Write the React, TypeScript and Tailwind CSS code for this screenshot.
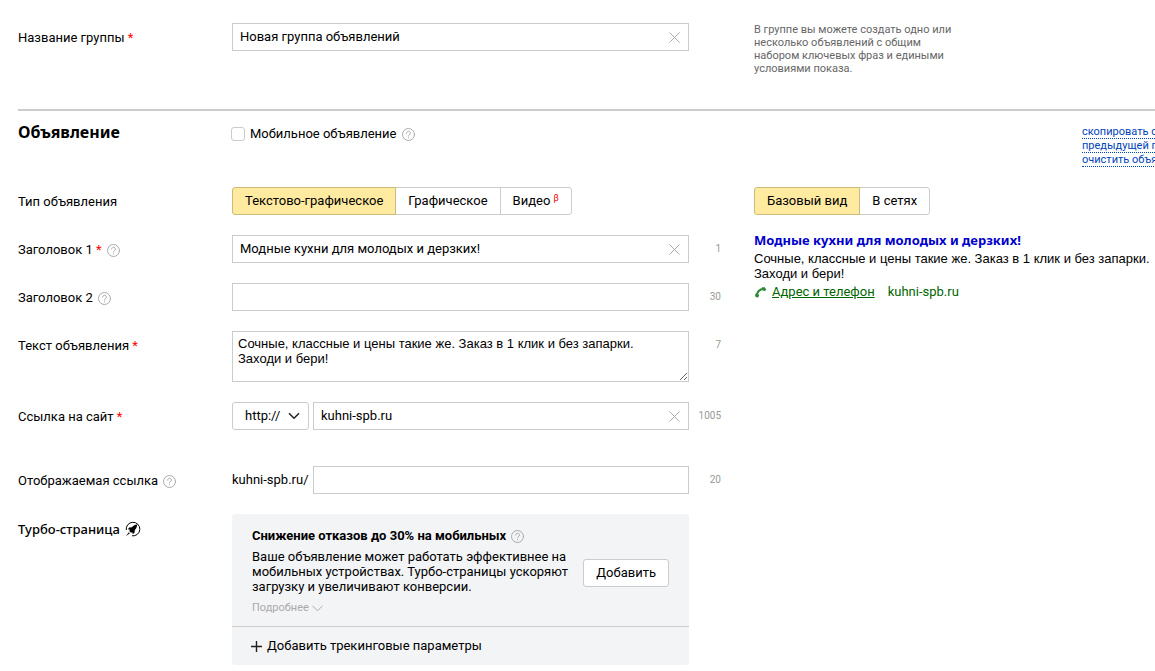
import { useId, useState, type ReactNode } from 'react';

function HelpButton() {
    return (
        <button type="button" aria-label="Справка" className="shrink-0 text-[#aaaaaa] cursor-pointer">
            <svg width="13" height="13" viewBox="0 0 13 13" fill="none" stroke="currentColor" strokeLinecap="round">
                <circle cx="6.5" cy="6.5" r="6" />
                <path d="M4.6 5.1a1.9 1.9 0 1 1 2.9 1.6c-.7.4-1 .7-1 1.3" />
                <path d="M6.5 9.7v.2" />
            </svg>
        </button>
    );
}

function Row({ label, htmlFor, required, help, counter, children }: {
    label: string;
    htmlFor?: string;
    required?: boolean;
    help?: boolean;
    counter?: number;
    children: ReactNode;
}) {
    return (
        <div className="grid grid-cols-[214px_minmax(0,1fr)_32px] items-start">
            <div className="flex items-center gap-[5px] pt-[7px]">
                <label htmlFor={htmlFor}>
                    {label}
                    {required && <span className="text-[#ff0000]"> *</span>}
                </label>
                {help && <HelpButton />}
            </div>
            {children}
            {counter !== undefined && (
                <span className="pt-[6px] text-right text-[10px] text-[#999999]">{counter}</span>
            )}
        </div>
    );
}

function TextField({ id, initial = '' }: { id: string; initial?: string }) {
    const [value, setValue] = useState(initial);

    return (
        <div className="flex h-7 min-w-0 flex-1 items-center border border-[#cccccc] bg-white">
            <input
                id={id}
                type="text"
                value={value}
                onChange={e => setValue(e.target.value)}
                className="h-full min-w-0 flex-1 bg-transparent px-[7px] pb-[2px] outline-none"
            />
            {value && (
                <button type="button" aria-label="Очистить" onClick={() => setValue('')} className="px-2 text-[#aaaaaa] cursor-pointer">
                    <svg width="11" height="11" viewBox="0 0 11 11" stroke="currentColor">
                        <path d="M.5.5l10 10M10.5.5l-10 10" />
                    </svg>
                </button>
            )}
        </div>
    );
}

function Segmented({ items }: { items: { key: string; title: ReactNode }[] }) {
    const [active, setActive] = useState(items[0].key);

    return (
        <div className="flex">
            {items.map(item => (
                <button
                    key={item.key}
                    type="button"
                    aria-pressed={item.key === active}
                    onClick={() => setActive(item.key)}
                    className={`-ml-px h-7 border px-3 cursor-pointer first:ml-0 first:rounded-l-[3px] last:rounded-r-[3px] ${
                        item.key === active ? 'z-10 border-[#ccba79] bg-[#ffeba0]' : 'border-[#cccccc] bg-white'
                    }`}
                >
                    {item.title}
                </button>
            ))}
        </div>
    );
}

function RocketIcon() {
    return (
        <svg width="16" height="16" viewBox="0 0 16 16" fill="none">
            <path d="M1.300 9A6.800 6.800 0 1 1 7 14.800" stroke="#000" />
            <path d="M12.200 3.600c-2.700.3-4.100 1.200-5.300 2.600L4.300 6.500 2.800 8.300l2 .3-.5 1.500 1.600 1.600 1.500-.5.300 2 1.800-1.500.3-2.600c1.400-1.300 2.200-2.800 2.400-5.500z" fill="#000" />
            <path d="M3.800 11.200l1 1L.8 15.200z" fill="#000" />
        </svg>
    );
}

export default function App() {
    const id = useId();

    return (
        <main className="overflow-x-hidden bg-white pl-[18px] pb-[6px] font-['Roboto',sans-serif] text-[13px] leading-4 text-black">
            <section className="grid grid-cols-[minmax(0,703px)_minmax(0,1fr)] gap-x-[33px] border-b-2 border-[#cccccc] pt-[23px] pb-[34px]">
                <Row label="Название группы" htmlFor={`${id}-group`} required>
                    <TextField id={`${id}-group`} initial="Новая группа объявлений" />
                </Row>
                <p className="max-w-[200px] text-[11px] leading-[13px] text-[#666666]">
                    В группе вы можете создать одно или несколько объявлений с общим набором ключевых фраз и едиными условиями показа.
                </p>
            </section>

            <section>
                <header className="flex h-[76px] items-start pt-[11px]">
                    <h2 className="w-[214px] shrink-0 font-['Noto_Sans',sans-serif] text-[16px] leading-5 font-bold">Объявление</h2>
                    <div className="flex flex-1 items-center gap-[5px] pt-[4px]">
                        <label className="flex items-center gap-[5px]">
                            <input type="checkbox" className="-ml-px size-[14px] appearance-none rounded-[3px] border border-[#cccccc] bg-white checked:bg-[#ffeba0]" />
                            Мобильное объявление
                        </label>
                        <HelpButton />
                    </div>
                    <div className="w-[73px] shrink-0 pt-[3px] text-[11px] leading-[13px] whitespace-nowrap text-[#0044bb]">
                        <a href="#copy" className="block w-max border-b border-dotted border-[#0044bb]">скопировать с</a>
                        <a href="#copy" className="block w-max border-b border-dotted border-[#0044bb]">предыдущей группы</a>
                        <a href="#clear" className="block w-max border-b border-dotted border-[#0044bb]">очистить объявление</a>
                    </div>
                </header>

                <div className="grid grid-cols-[minmax(0,703px)_minmax(0,1fr)] items-start gap-x-[33px]">
                    <form className="flex flex-col gap-5" onSubmit={e => e.preventDefault()}>
                        <Row label="Тип объявления">
                            <Segmented
                                items={[
                                    { key: 'text', title: 'Текстово-графическое' },
                                    { key: 'image', title: 'Графическое' },
                                    { key: 'video', title: <>Видео <sup className="text-[9px] text-[#ff0000]">β</sup></> },
                                ]}
                            />
                        </Row>
                        <Row label="Заголовок 1" htmlFor={`${id}-title1`} required help counter={1}>
                            <TextField id={`${id}-title1`} initial="Модные кухни для молодых и дерзких!" />
                        </Row>
                        <Row label="Заголовок 2" htmlFor={`${id}-title2`} help counter={30}>
                            <TextField id={`${id}-title2`} />
                        </Row>
                        <Row label="Текст объявления" htmlFor={`${id}-text`} required counter={7}>
                            <textarea
                                id={`${id}-text`}
                                defaultValue={'Сочные, классные и цены такие же. Заказ в 1 клик и без запарки.\nЗаходи и бери!'}
                                className="block h-[51px] w-full resize border border-[#cccccc] px-[5px] py-1 font-['Liberation_Sans',sans-serif] leading-[15px] outline-none"
                            />
                        </Row>
                        <Row label="Ссылка на сайт" htmlFor={`${id}-url`} required counter={1005}>
                            <div className="flex gap-1">
                                <div className="relative w-[77px] shrink-0">
                                    <select aria-label="Протокол" className="h-7 w-full appearance-none rounded-[3px] border border-[#cccccc] bg-white px-3 outline-none">
                                        <option>http://</option>
                                        <option>https://</option>
                                    </select>
                                    <svg width="12" height="8" viewBox="0 0 12 8" fill="none" stroke="#222" strokeWidth="1.5" className="pointer-events-none absolute top-[10px] right-[9px]">
                                        <path d="M1 1.200l5 5 5-5" />
                                    </svg>
                                </div>
                                <TextField id={`${id}-url`} initial="kuhni-spb.ru" />
                            </div>
                        </Row>
                        <div className="pt-4">
                            <Row label="Отображаемая ссылка" htmlFor={`${id}-path`} help counter={20}>
                                <div className="flex items-center">
                                    <span className="w-[81px] shrink-0 whitespace-nowrap">kuhni-spb.ru/</span>
                                    <TextField id={`${id}-path`} />
                                </div>
                            </Row>
                        </div>

                        <div className="grid grid-cols-[214px_minmax(0,1fr)_32px] items-start">
                            <h3 className="flex items-center gap-[5px] pt-[7px] font-['Noto_Sans',sans-serif] font-medium">
                                Турбо-страница
                                <RocketIcon />
                            </h3>
                            <div className="rounded-[3px] bg-[#f3f4f6]">
                                <div className="flex items-start justify-between px-5 pt-[14px] pb-[10px]">
                                    <div>
                                        <h4 className="flex items-center gap-[5px] font-bold">
                                            Снижение отказов до 30% на мобильных
                                            <HelpButton />
                                        </h4>
                                        <p className="mt-[5px] w-[320px] leading-[15px]">
                                            Ваше объявление может работать эффективнее на мобильных устройствах. Турбо-страницы ускоряют загрузку и увеличивают конверсии.
                                        </p>
                                        <button type="button" className="mt-[6px] flex items-center gap-[3px] text-[11px] text-[#aaaaaa] cursor-pointer">
                                            Подробнее
                                            <svg width="11" height="7" viewBox="0 0 11 7" fill="none" stroke="currentColor">
                                                <path d="M.5.8l5 5 5-5" />
                                            </svg>
                                        </button>
                                    </div>
                                    <button type="button" className="mt-[31px] h-7 shrink-0 rounded-[3px] border border-[#cccccc] bg-white px-3 cursor-pointer">
                                        Добавить
                                    </button>
                                </div>
                                <div className="border-t border-[#cccccc] px-[19px] py-[11px]">
                                    <button type="button" className="flex items-center gap-[5px] cursor-pointer">
                                        <svg width="11" height="11" viewBox="0 0 11 11" stroke="#222" strokeWidth="1.400">
                                            <path d="M5.500 0v11M0 5.500h11" />
                                        </svg>
                                        Добавить трекинговые параметры
                                    </button>
                                </div>
                            </div>
                        </div>
                    </form>

                    <aside>
                        <Segmented items={[{ key: 'base', title: 'Базовый вид' }, { key: 'network', title: 'В сетях' }]} />
                        <h3 className="mt-[17px] font-['Noto_Sans',sans-serif] font-bold text-[#0000cc]">Модные кухни для молодых и дерзких!</h3>
                        <p className="mt-[3px] font-['Liberation_Sans',sans-serif] leading-[15px]">
                            Сочные, классные и цены такие же. Заказ в 1 клик и без запарки. Заходи и бери!
                        </p>
                        <div className="mt-[3px] flex items-center text-[#006600]">
                            <svg width="13" height="13" viewBox="0 0 13 13" className="mr-[5px]" fill="none">
                                <path d="M3 10C2.800 6 5.500 3 9.500 3" stroke="#2f8a3a" strokeWidth="2.200" />
                                <path d="M7.800 1.300h3l1.500 2.500-1.800 1.400-2.200-1.200zM1.200 7.800h2.800l1.200 2.200-1.800 1.800-2.200-1.300z" fill="#2f8a3a" />
                            </svg>
                            <a href="#contacts" className="underline">Адрес и телефон</a>
                            <span className="ml-[13px]">kuhni-spb.ru</span>
                        </div>
                    </aside>
                </div>
            </section>
        </main>
    );
}
